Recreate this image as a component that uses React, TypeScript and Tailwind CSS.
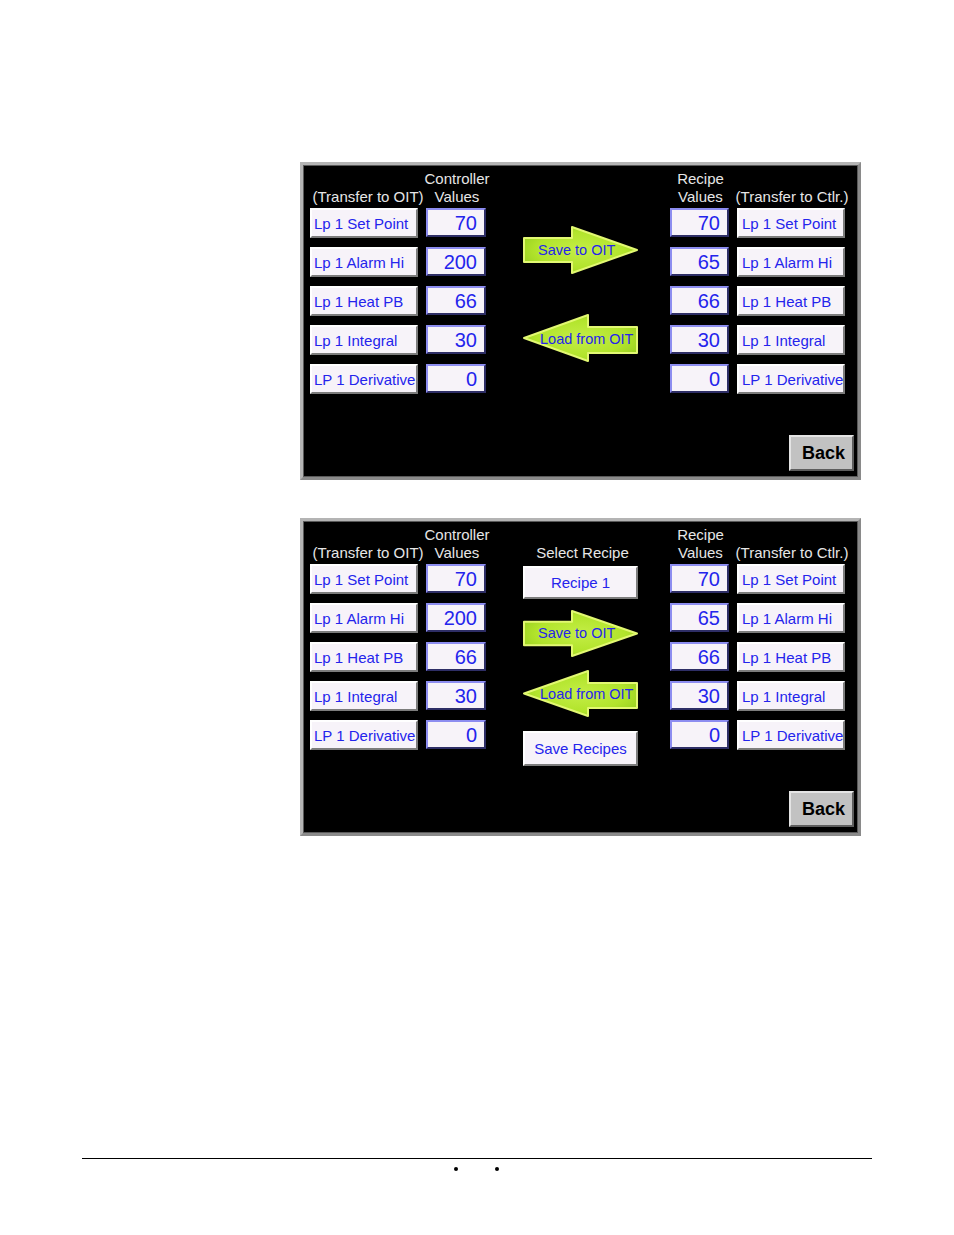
import React from "react";

const rows = [
  { l: "Lp 1 Set Point", c: "70", r: "70" },
  { l: "Lp 1 Alarm Hi", c: "200", r: "65" },
  { l: "Lp 1 Heat PB", c: "66", r: "66" },
  { l: "Lp 1 Integral", c: "30", r: "30" },
  { l: "LP 1 Derivative", c: "0", r: "0" },
];

function Label({ text, pl }: { text: string; pl: string }) {
  return (
    <div
      className={`h-[30px] w-[108px] bg-[#f7f3f9] border-2 border-t-white border-l-white border-r-[#7c7c7c] border-b-[#7c7c7c] flex items-center ${pl} text-[15px] leading-none text-[#2424ec] whitespace-nowrap`}
    >
      {text}
    </div>
  );
}

function Value({ v, w }: { v: string; w: string }) {
  return (
    <div
      className={`h-[29px] ${w} bg-[#f7f3f9] border-2 border-t-[#8d8df0] border-l-[#8d8df0] border-r-[#2e2e66] border-b-[#2e2e66] flex items-center justify-end pr-[7px] text-[20px] leading-none text-[#2424ec]`}
    >
      {v}
    </div>
  );
}

function Header({ l1, l2, shift = "" }: { l1?: string; l2: string; shift?: string }) {
  return (
    <div className={`h-[41px] mb-[2px] flex flex-col justify-end items-center ${shift} text-[15px] leading-[18px] text-[#e6e6e6] whitespace-nowrap`}>
      {l1 && <div>{l1}</div>}
      <div>{l2}</div>
    </div>
  );
}

function ArrowGrad({ id }: { id: string }) {
  return (
    <defs>
      <radialGradient id={id} cx="50%" cy="50%" r="65%">
        <stop offset="0%" stopColor="#c4ee46" />
        <stop offset="60%" stopColor="#b2e42c" />
        <stop offset="100%" stopColor="#92ca1e" />
      </radialGradient>
    </defs>
  );
}

function SaveArrow({ h = 48 }: { h?: number }) {
  const m = h / 2;
  const b1 = h * 0.25;
  const b2 = h * 0.75;
  return (
    <div className="relative w-[115px]" style={{ height: h }}>
      <svg width="115" height={h} viewBox={`0 0 115 ${h}`} className="absolute inset-0">
        <ArrowGrad id={`sg${h}`} />
        <path
          d={`M1,${b1} L49,${b1} L49,1 L114,${m} L49,${h - 1} L49,${b2} L1,${b2} Z`}
          fill={`url(#sg${h})`}
          stroke="#e2f872"
          strokeWidth="2"
          strokeLinejoin="round"
        />
      </svg>
      <div className="absolute inset-0 flex items-center pl-[15px] text-[14.5px] leading-none text-[#2424ec] whitespace-nowrap">
        Save to OIT
      </div>
    </div>
  );
}

function LoadArrow({ h = 48 }: { h?: number }) {
  const m = h / 2;
  const b1 = Math.round(h * 0.27);
  const b2 = Math.round(h * 0.81);
  return (
    <div className="relative w-[115px]" style={{ height: h }}>
      <svg width="115" height={h} viewBox={`0 0 115 ${h}`} className="absolute inset-0">
        <ArrowGrad id={`lg${h}`} />
        <path
          d={`M1,${m} L65,1 L65,${b1} L114,${b1} L114,${b2} L65,${b2} L65,${h - 1} Z`}
          fill={`url(#lg${h})`}
          stroke="#e2f872"
          strokeWidth="2"
          strokeLinejoin="round"
        />
      </svg>
      <div className="absolute inset-0 flex items-center pl-[17px] pt-[2px] text-[14.5px] leading-none text-[#2424ec] whitespace-nowrap">
        Load from OIT
      </div>
    </div>
  );
}

function PlainButton({ text, h }: { text: string; h: string }) {
  return (
    <div
      className={`${h} w-[115px] bg-[#f7f3f9] border-2 border-t-white border-l-white border-r-[#7c7c7c] border-b-[#7c7c7c] flex items-center justify-center text-[15px] leading-none text-[#2424ec] whitespace-nowrap`}
    >
      {text}
    </div>
  );
}

function Panel({ recipe }: { recipe: boolean }) {
  return (
    <div className="w-[561px] h-[318px] bg-black border-[3px] border-t-[#b4b4b4] border-l-[#b4b4b4] border-r-[#8a8a8a] border-b-[#8a8a8a] shadow-[inset_0_0_0_1px_#5a5a5a] flex flex-col pl-[7px] pr-[4px] pb-[6px]">
      <div className="flex">
        <div className="w-[108px] flex flex-col">
          <Header l2="(Transfer to OIT)" shift="pl-[8px]" />
          <div className="flex flex-col gap-[9px]">
            {rows.map((r) => (
              <Label key={r.l} text={r.l} pl="pl-[2px]" />
            ))}
          </div>
        </div>
        <div className="w-[60px] ml-[8px] flex flex-col">
          <Header l1="Controller" l2="Values" shift="pl-[2px]" />
          <div className="flex flex-col gap-[9px]">
            {rows.map((r) => (
              <div key={r.l} className="h-[30px]">
                <Value v={r.c} w="w-[60px]" />
              </div>
            ))}
          </div>
        </div>
        <div className="w-[115px] ml-[37px] flex flex-col">
          {recipe ? (
            <>
              <Header l2="Select Recipe" shift="pl-[4px]" />
              <div className="mt-[2px]">
                <PlainButton text="Recipe 1" h="h-[33px]" />
              </div>
              <div className="mt-[11px]">
                <SaveArrow h={47} />
              </div>
              <div className="mt-[13px]">
                <LoadArrow h={47} />
              </div>
              <div className="mt-[14px]">
                <PlainButton text="Save Recipes" h="h-[35px]" />
              </div>
            </>
          ) : (
            <>
              <div className="h-[43px]" />
              <div className="mt-[18px]">
                <SaveArrow />
              </div>
              <div className="mt-[40px]">
                <LoadArrow />
              </div>
            </>
          )}
        </div>
        <div className="w-[59px] ml-[32px] flex flex-col">
          <Header l1="Recipe" l2="Values" shift="pl-[2px]" />
          <div className="flex flex-col gap-[9px]">
            {rows.map((r) => (
              <div key={r.l} className="h-[30px]">
                <Value v={r.r} w="w-[59px]" />
              </div>
            ))}
          </div>
        </div>
        <div className="w-[108px] ml-[8px] flex flex-col">
          <Header l2="(Transfer to Ctlr.)" shift="pl-[2px]" />
          <div className="flex flex-col gap-[9px]">
            {rows.map((r) => (
              <Label key={r.l} text={r.l} pl="pl-[3px]" />
            ))}
          </div>
        </div>
      </div>
      <div className="mt-auto flex justify-end">
        <div className="w-[65px] h-[36px] bg-[#c2c2c2] border-2 border-t-[#e4e4e4] border-l-[#e4e4e4] border-r-[#5e5e5e] border-b-[#5e5e5e] flex items-center justify-center pl-[4px] text-[18px] font-bold leading-none text-black">
          Back
        </div>
      </div>
    </div>
  );
}

export default function App() {
  return (
    <div className="w-[954px] h-[1235px] bg-white flex flex-col font-['Liberation_Sans',Arial,sans-serif]">
      <div className="pt-[162px] pl-[300px] flex flex-col gap-[38px]">
        <Panel recipe={false} />
        <Panel recipe={true} />
      </div>
      <div className="mt-[322px] ml-[82px] w-[790px] h-px bg-black" />
      <div className="mt-[8px] ml-[454px] flex gap-[37px]">
        <div className="w-[4px] h-[4px] rounded-full bg-black" />
        <div className="w-[4px] h-[4px] rounded-full bg-black" />
      </div>
    </div>
  );
}
